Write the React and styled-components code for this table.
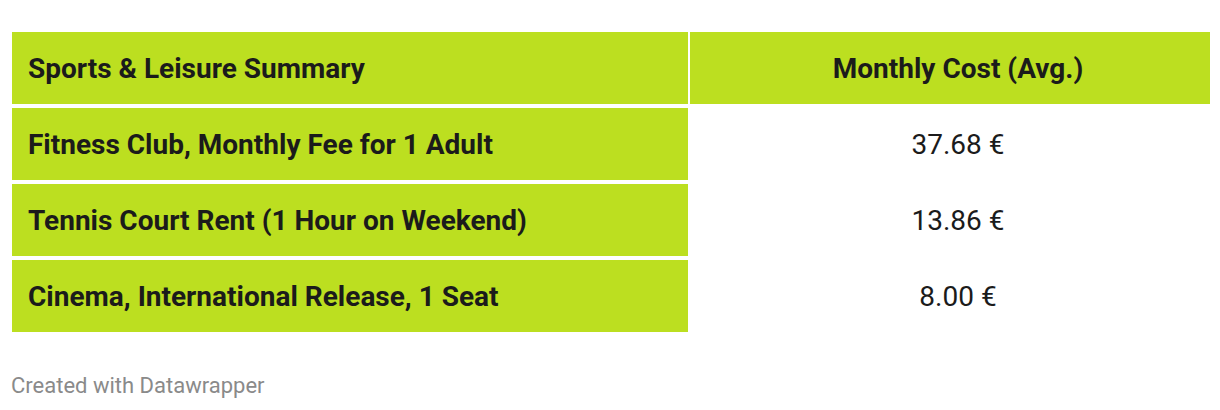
import React from "react";
import styled, { createGlobalStyle } from "styled-components";

const Global = createGlobalStyle`
  html, body { margin: 0; padding: 0; background: #ffffff; }
  body { font-family: Roboto, "Liberation Sans", sans-serif; color: #1d1d1d; }
`;

const Page = styled.div`
  padding: 32px 10px 0 12px;
  width: 1198px;
`;

const Table = styled.div`
  display: grid;
  grid-template-columns: 676px 520px;
  column-gap: 2px;
  row-gap: 4px;
`;

const Cell = styled.div`
  height: 72px;
  display: flex;
  align-items: center;
  justify-content: ${(p) => (p.$center ? "center" : "flex-start")};
  padding: 0 16px 0 ${(p) => (p.$center ? "32px" : "16px")};
  box-sizing: border-box;
  background: ${(p) => (p.$fill ? "#bcdf20" : "transparent")};
  font-size: 28px;
  font-weight: ${(p) => (p.$bold ? 700 : 400)};
  color: #1b1b1b;
  white-space: nowrap;
`;

const Footer = styled.div`
  margin-top: 41px;
  margin-left: -1px;
  font-size: 22px;
  color: #8a8a8a;
  font-family: Roboto, "Liberation Sans", sans-serif;
`;

const rows = [
  ["Fitness Club, Monthly Fee for 1 Adult", "37.68 €"],
  ["Tennis Court Rent (1 Hour on Weekend)", "13.86 €"],
  ["Cinema, International Release, 1 Seat", "8.00 €"],
];

export default function App() {
  return (
    <>
      <Global />
      <Page>
        <Table>
          <Cell $fill $bold>Sports &amp; Leisure Summary</Cell>
          <Cell $fill $bold $center>Monthly Cost (Avg.)</Cell>
          {rows.map(([label, value]) => (
            <React.Fragment key={label}>
              <Cell $fill $bold>{label}</Cell>
              <Cell $center>{value}</Cell>
            </React.Fragment>
          ))}
        </Table>
        <Footer>Created with Datawrapper</Footer>
      </Page>
    </>
  );
}
